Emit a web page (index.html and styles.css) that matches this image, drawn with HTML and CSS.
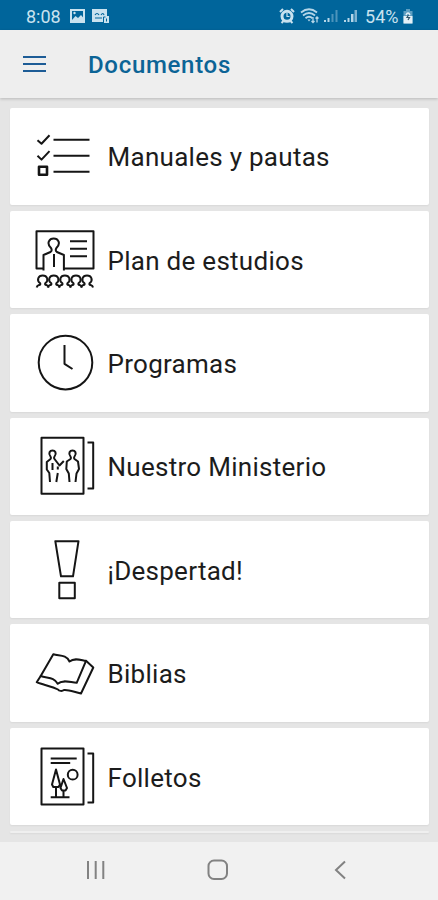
FILE: index.html
```html
<!DOCTYPE html>
<html lang="es">
<head>
  <meta charset="UTF-8" />
  <meta name="viewport" content="width=device-width, initial-scale=1.0">
  <title>Documentos</title>
  <link rel="stylesheet" href="styles.css">
</head>
<body>
  <!-- Barra de estado -->
  <div class="estado">
    <span class="hora">8:08</span>
    <svg class="ico-imagen" width="15" height="14" viewBox="0 0 15 14">
      <path d="M1 1h13v12H1z" fill="none" stroke="#c9e2ef" stroke-width="2"/>
      <path d="M2 11l3.500-4 2.500 2 3-3 2.500 3v3H2z" fill="#c9e2ef"/>
      <circle cx="4.500" cy="4" r="1.200" fill="#c9e2ef"/>
    </svg>
    <svg class="ico-aviso" width="18" height="15" viewBox="0 0 18 15">
      <path d="M0 0h15v7h2v7h-5v-1H0z" fill="#c9e2ef"/>
      <path d="M3 6q2-3 4 0M9 6q2-3 3 0M3 9h7" fill="none" stroke="#00659b" stroke-width="1.200"/>
      <path d="M11.500 13V8h2" fill="none" stroke="#00659b"/>
      <path d="M14.500 9.500v3" stroke="#00659b"/>
    </svg>
    <div class="estado-der">
      <svg width="16" height="16" viewBox="0 0 16 16" fill="none" stroke="#c9e2ef">
        <circle cx="8" cy="8.300" r="5" stroke-width="3"/>
        <path d="M1 4l3-3M15 4l-3-3M2.500 15l2-2M13.500 15l-2-2" stroke-width="2"/>
        <path d="M8 5v3.500h2.500" stroke-width="1.200"/>
      </svg>
      <svg width="20" height="16" viewBox="0 0 20 16" fill="none" stroke="#b5d6e8">
        <path d="M1 4.500q8-6.500 16 0M3 7.500q6-5 12 0M5.500 10.200q3.500-3 7 0" stroke-width="1.800"/>
        <path d="M7.500 11.500h3l-1.500 2z" fill="#b5d6e8" stroke="none"/>
        <path d="M13 9v5.500M11.500 13l1.500 1.500 1.500-1.500M17 14.500V9M15.500 10.500L17 9l1.500 1.500" stroke-width="1.300"/>
      </svg>
      <svg width="15" height="14" viewBox="0 0 15 14">
        <path d="M0 11h2v2H0zM3.500 9h2v4h-2z" fill="#b5d6e8"/>
        <path d="M7.500 5h2v8h-2zM11.500 1h2v12h-2z" fill="#4c94bb"/>
      </svg>
      <svg width="14" height="14" viewBox="0 0 14 14">
        <path d="M0 11h2v2H0zM3.500 9h2v4h-2zM7 5h2.500v8H7z" fill="#b5d6e8"/>
        <path d="M10.500 1h2.500v12h-2.500z" fill="#7fb3d0"/>
      </svg>
      <span class="bateria">54%</span>
      <svg width="10" height="16" viewBox="0 0 10 16">
        <path d="M3 1h4v2h2.500v12.500H.5V3H3z" fill="#5e9fc2"/>
        <path d="M.5 8h9v7.500h-9z" fill="#e3f0f7"/>
        <path d="M3 7q2-4 4 0" fill="none" stroke="#e3f0f7" stroke-width="1.500"/>
        <path d="M5.500 7l-1.500 2.500h2.500l-1.500 2.500" fill="none" stroke="#31566b" stroke-width="1.200"/>
      </svg>
    </div>
  </div>

  <header>
    <button class="btn-menu" aria-label="Menú">
      <span></span>
      <span></span>
      <span></span>
    </button>
    <h1>Documentos</h1>
  </header>

  <main class="lista">
    <a class="tarjeta">
      <svg class="icono" viewBox="0 0 60 60">
        <path d="M2.500 14.300l4 3.500 8-8.500M2.500 29.800l4 3.800 8-8.500"/>
        <path d="M18.500 13.800h36M18.500 29.800h36M18.500 45.800h36"/>
        <path d="M4 40.800h8v8H4z" stroke-width="2.600"/>
      </svg>
      <span>Manuales y pautas</span>
    </a>
    <a class="tarjeta">
      <svg class="icono" viewBox="0 0 60 60">
        <defs>
          <path id="persona" d="M-6 57.500c.5-3.500 4.500-1.500 3.500-4.200-4-3-2-7.800 2.500-7.800s6.500 4.800 2.500 7.800c-1 2.700 3 .7 3.500 4.200"/>
        </defs>
        <path d="M8 38.500H1.500V1.300h57v37.200H29"/>
        <path d="M8.500 40.500V25l7-3q2-1.500.5-4c-5-5-1.500-9.500 2.700-9.500s7.700 4.500 2.700 9.500q-1.500 2.500.5 4l7 3v15.500M19 24v13"/>
        <path d="M35 11.300h17M35 18.800h17M35 26.200h17"/>
        <use href="#persona" x="7.700"/>
        <use href="#persona" x="18.800"/>
        <use href="#persona" x="29.900"/>
        <use href="#persona" x="41"/>
        <use href="#persona" x="52"/>
      </svg>
      <span>Plan de estudios</span>
    </a>
    <a class="tarjeta">
      <svg class="icono" viewBox="0 0 60 60">
        <circle cx="30.500" cy="29.600" r="26.800"/>
        <path d="M29.500 12v18.800l8 5.200"/>
      </svg>
      <span>Programas</span>
    </a>
    <a class="tarjeta">
      <svg class="icono" viewBox="0 0 60 60">
        <path d="M6.500 1.700h42v56h-42z"/>
        <path d="M52.500 6.500h5.700v46h-5.700"/>
        <path d="M15 46l-.7-9-2.500-3.500V26l3.700-3q1-1 0-2.500c-2.700-3.500-.5-6 2-6s4.700 2.500 2 6q-1 1.500 0 2.500l5 6.500 4.300-4.500M22.800 30.500v3M22.800 37L21.300 46M17.500 27v7"/>
        <path d="M34.500 46l-.7-8.500-2.500-4.500.5-7.500 3.700-2.500q1-1 0-2.500c-2.700-3.500-.5-6 2-6s4.700 2.500 2 6q-1 1.500 0 2.500l3.500 2.500 1 7.500-2.500 4.500-1 8.500"/>
      </svg>
      <span>Nuestro Ministerio</span>
    </a>
    <a class="tarjeta">
      <svg class="icono" viewBox="0 0 60 60">
        <path d="M20.300 1.200h23.200L38 36.300H26zM24.300 42.800h15.500v15.500H24.300z"/>
      </svg>
      <span>¡Despertad!</span>
    </a>
    <a class="tarjeta">
      <svg class="icono" viewBox="0 0 60 60">
        <path d="M5.700 33L18.300 11.200c5 2 13 0 16.200 7.300 5-4 11-1.500 16.500-.7L41.700 39.800c-7-.5-14-3.500-19 1C19 33.500 12 35.500 5.700 33z"/>
        <path d="M51 17.800l7.300 6.700L46 50.500c-7-1.500-12-4-17-3.500-2 1.500-5 1-6-.5C17 43 8 42 1.700 39.200L5.700 33"/>
      </svg>
      <span>Biblias</span>
    </a>
    <a class="tarjeta">
      <svg class="icono" viewBox="0 0 60 60">
        <path d="M6.500 1.500h42v56h-42z"/>
        <path d="M52.500 6.500h5.700v49h-5.700"/>
        <path d="M15.700 11.500h26M15.700 16h19.500M15.700 50.200h18.800"/>
        <circle cx="37.700" cy="27.700" r="4.900"/>
        <path d="M21 22.500l4 15-1.500 2.500h-5.200l-1.300-2.500zM21 40v10M28.500 32l3.500 9-1.500 2.500h-3.500L25.500 41zM28.500 43v7"/>
      </svg>
      <span>Folletos</span>
    </a>
    <a class="tarjeta cortada"></a>
  </main>

  <!-- Botones de navegación -->
  <nav>
    <svg width="20" height="20" viewBox="0 0 20 20">
      <path d="M2 1v18M9.700 1v18M17.300 1v18"/>
    </svg>
    <svg class="inicio" width="22" height="22" viewBox="0 0 22 22">
      <rect x="1.500" y="1.500" width="18.500" height="18.500" rx="5.500"/>
    </svg>
    <svg width="14" height="20" viewBox="0 0 14 20">
      <path d="M11 1.500L2 10l9 8.500"/>
    </svg>
  </nav>
</body>
</html>
```

FILE: styles.css
```css
* {
  box-sizing: border-box;
}

body {
  margin: 0;
  height: 900px;
  display: flex;
  flex-direction: column;
  overflow: hidden;
  background-color: #e5e5e5;
  font-family: Roboto, sans-serif;
}

/* Barra de estado */
.estado {
  height: 30px;
  flex-shrink: 0;
  display: flex;
  align-items: center;
  padding: 2px 25px 0 26px;
  background-color: #00659b;
  color: #c9e2ef;
  font-size: 18px;
}

.ico-imagen {
  margin-left: 9px;
}

.ico-aviso {
  margin-left: 7px;
}

.estado-der {
  display: flex;
  align-items: center;
  gap: 4.500px;
  margin-left: auto;
}

.bateria {
  margin-left: 3px;
}

/* Header */
header {
  height: 68px;
  flex-shrink: 0;
  display: flex;
  align-items: center;
  padding: 0 23px 1px;
  background-color: #eeeeee;
  box-shadow: 0 1px 3px rgba(0, 0, 0, 0.2);
}

.btn-menu {
  width: 23px;
  padding: 0;
  border: none;
  background: none;
  display: flex;
  flex-direction: column;
  gap: 5px;
}

.btn-menu span {
  height: 2px;
  background-color: #1d5c96;
}

h1 {
  margin: 3px 0 0 42px;
  font-size: 24px;
  font-weight: 500;
  letter-spacing: 0.7px;
  color: #0c6496;
}

/* Lista de documentos */
.lista {
  flex: 1;
  min-height: 0;
  display: flex;
  flex-direction: column;
  gap: 6px;
  padding: 9.500px 9.500px 0 10px;
  overflow: hidden;
}

.tarjeta {
  height: 97.400px;
  flex-shrink: 0;
  display: flex;
  align-items: center;
  gap: 13px;
  padding-left: 24.500px;
  border-radius: 2px;
  background-color: #ffffff;
  box-shadow: 0 1px 2px rgba(0, 0, 0, 0.06);
  color: #1c1c1c;
  font-size: 26px;
  letter-spacing: 0.28px;
}

.tarjeta span {
  padding-top: 2px;
}

.cortada {
  height: 2px;
  background-color: #efefef;
}

.icono {
  width: 60px;
  height: 60px;
  fill: none;
  stroke: #151515;
  stroke-width: 2;
  stroke-linejoin: round;
}

/* Barra inferior */
nav {
  height: 58px;
  flex-shrink: 0;
  display: flex;
  align-items: center;
  justify-content: space-between;
  padding: 0 90px 2px 86px;
  background-color: #f1f1f1;
}

nav svg {
  fill: none;
  stroke: #828282;
  stroke-width: 2;
}

nav .inicio {
  margin-right: 4px;
}
```
